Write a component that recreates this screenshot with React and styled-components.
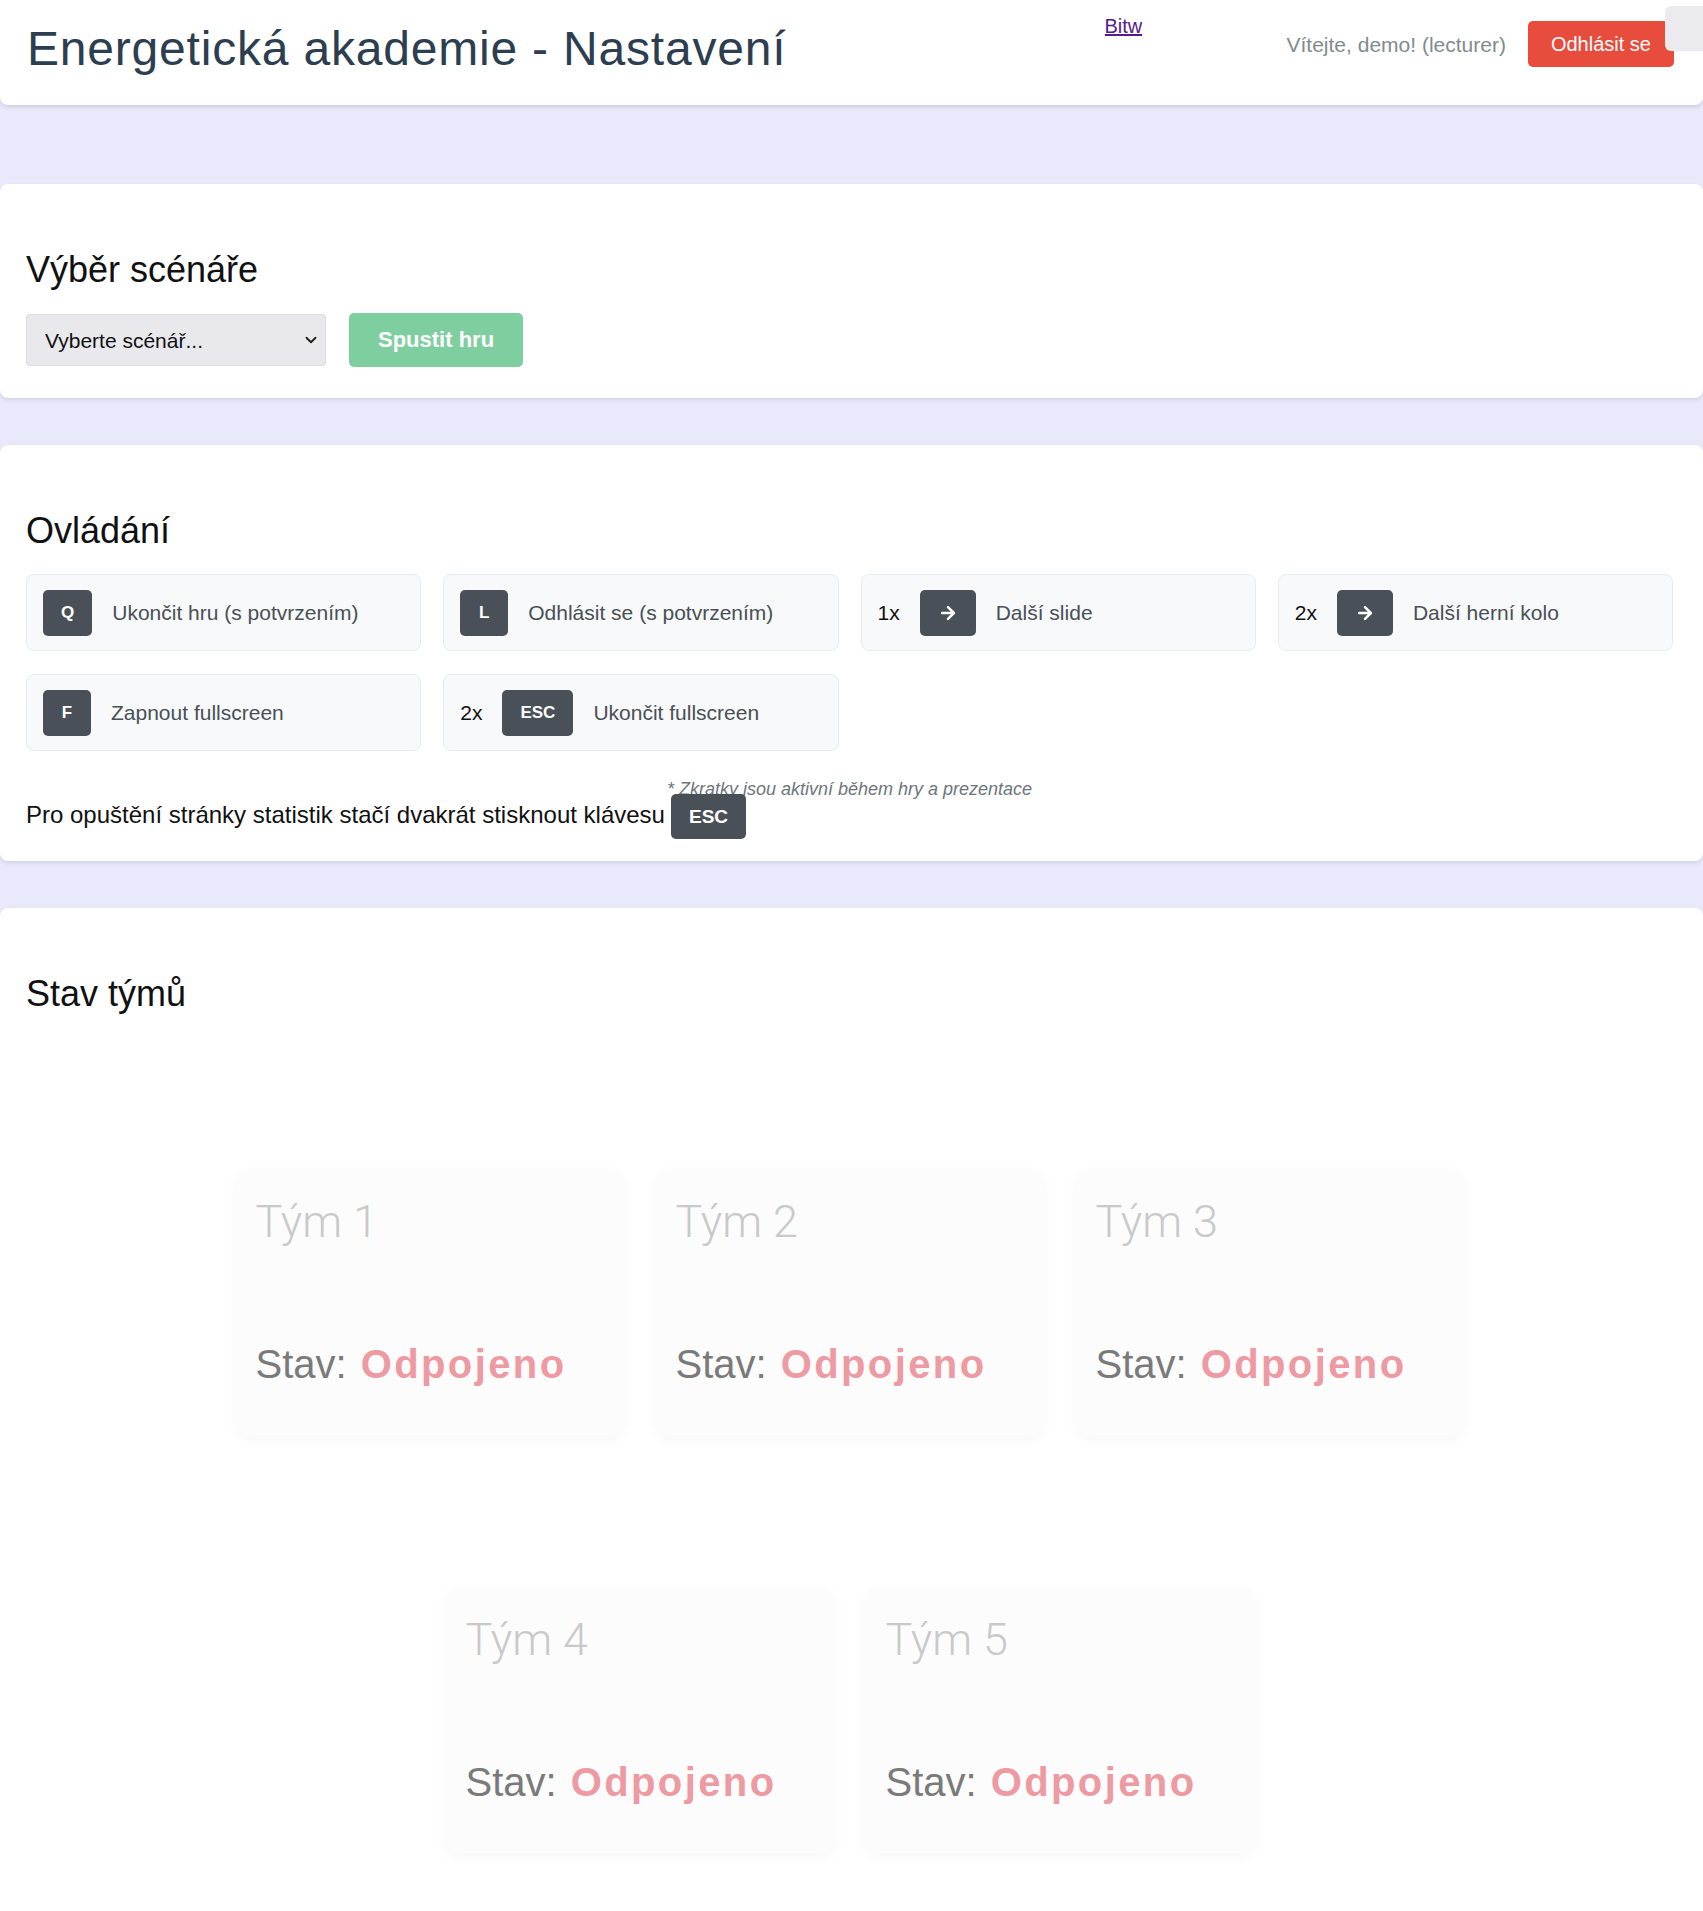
import React from "react";
import styled, { createGlobalStyle } from "styled-components";
import { ArrowRight, ChevronDown } from "lucide-react";

const GlobalStyle = createGlobalStyle`
	body {
		margin: 0;
		background: #e8eafc;
		font-family: "Liberation Sans", Arial, sans-serif;
		color: #212529;
	}
	* {
		box-sizing: border-box;
	}
`;

const Header = styled.header`
	position: relative;
	display: flex;
	align-items: flex-start;
	background: #fff;
	padding: 21px 29px 29px 27px;
	border-radius: 0 0 8px 8px;
	box-shadow: 0 2px 4px rgba(0, 0, 0, 0.12);
`;

const Title = styled.h1`
	flex: 1;
	margin: 0;
	font-size: 48px;
	font-weight: normal;
	letter-spacing: 0.8px;
	color: #2c3e50;
	line-height: 55px;
`;

// the nav link is clipped by its box in the original page
const NavLink = styled.a`
	display: block;
	width: 37px;
	margin: -6px 145px 0 0;
	overflow: hidden;
	white-space: nowrap;
	font-size: 20px;
	color: #551a8b;
	text-decoration: underline;
`;

const Welcome = styled.span`
	margin: 12px 22px 0 0;
	font-size: 21px;
	line-height: 24px;
	color: #7f8c8d;
`;

const LogoutButton = styled.button`
	border: none;
	border-radius: 5px;
	background: #e74c3c;
	color: #fff;
	font-family: inherit;
	font-size: 20px;
	line-height: 24px;
	padding: 11px 23px;
`;

const CornerTab = styled.div`
	position: absolute;
	top: 6px;
	right: 0;
	width: 38px;
	height: 45px;
	background: #ebebef;
	border-radius: 6px 0 0 6px;
`;

const Main = styled.main`
	display: flex;
	flex-direction: column;
	gap: 47px;
	padding-top: 79px;
`;

const Card = styled.section`
	background: #fff;
	border-radius: 8px;
	box-shadow: 0 2px 4px rgba(0, 0, 0, 0.1);
	padding: 65px 30px ${props => props.bottom || 31}px 26px;
`;

const Heading = styled.h2`
	margin: 0 0 23px;
	font-size: 36px;
	font-weight: normal;
	line-height: 41px;
	color: #111;
`;

const Row = styled.div`
	display: flex;
	align-items: center;
	gap: 23px;
`;

const SelectWrap = styled.div`
	position: relative;
	width: 300px;
`;

const Select = styled.select`
	appearance: none;
	width: 100%;
	height: 52px;
	padding: 0 40px 0 18px;
	border: 1px solid #dcdce0;
	border-radius: 4px;
	background: #e9e9ed;
	font-family: inherit;
	font-size: 21px;
	color: #111;
`;

const Chevron = styled.span`
	position: absolute;
	right: 6px;
	top: 17px;
	color: #222;
	pointer-events: none;
`;

const StartButton = styled.button`
	height: 54px;
	padding: 0 29px;
	border: none;
	border-radius: 5px;
	background: #7fcea0;
	color: #fff;
	font-family: inherit;
	font-size: 22px;
	font-weight: bold;
`;

const ShortcutGrid = styled.div`
	display: grid;
	grid-template-columns: repeat(4, 1fr);
	gap: 23px 22px;
`;

const Shortcut = styled.div`
	display: flex;
	align-items: center;
	gap: 20px;
	height: 77px;
	padding: 0 16px;
	background: #f8f9fa;
	border: 1px solid #e9ecef;
	border-radius: 8px;
`;

const Key = styled.kbd`
	display: ${props => (props.inline ? "inline" : "inline-flex")};
	align-items: center;
	justify-content: center;
	min-width: 48px;
	height: ${props => (props.inline ? "auto" : "46px")};
	padding: ${props => (props.inline ? "12px 18px" : "0 18px")};
	margin-left: ${props => (props.inline ? "6px" : "0")};
	background: #495057;
	color: #fff;
	border-radius: 5px;
	font-family: "Liberation Sans", Arial, sans-serif;
	font-size: ${props => (props.inline ? "19px" : "17px")};
	font-weight: bold;
`;

const Times = styled.span`
	font-size: 21px;
	color: #111;
`;

const Label = styled.span`
	font-size: 21px;
	color: #495057;
`;

const Note = styled.p`
	margin: 28px 0 0;
	text-align: center;
	font-size: 18px;
	font-style: italic;
	line-height: 20px;
	color: #6c757d;
`;

const Hint = styled.p`
	margin: 2px 0 0;
	font-size: 24px;
	line-height: 27px;
	color: #111;
`;

const TeamWrap = styled.div`
	display: flex;
	flex-wrap: wrap;
	justify-content: center;
	gap: 152px 32px;
	padding-top: 132px;
`;

const TeamCard = styled.div`
	display: flex;
	flex-direction: column;
	justify-content: space-between;
	width: 388px;
	height: 266px;
	padding: 24px 20px 47px;
	background: #fcfcfd;
	border-radius: 12px;
	box-shadow: 0 4px 14px rgba(0, 0, 0, 0.035);
`;

const TeamName = styled.h3`
	margin: 0;
	font-family: Roboto, "Liberation Sans", sans-serif;
	font-size: 45px;
	font-weight: 300;
	line-height: 57px;
	color: #c9c9c9;
`;

const Status = styled.div`
	font-size: 40px;
	line-height: 48px;
	color: #7a7a7a;
`;

const StatusValue = styled.strong`
	margin-left: 14px;
	letter-spacing: 2.4px;
	color: #ee9aa3;
`;

const shortcuts = [
	{ key: "Q", label: "Ukončit hru (s potvrzením)" },
	{ key: "L", label: "Odhlásit se (s potvrzením)" },
	{ times: "1x", arrow: true, label: "Další slide" },
	{ times: "2x", arrow: true, label: "Další herní kolo" },
	{ key: "F", label: "Zapnout fullscreen" },
	{ times: "2x", key: "ESC", label: "Ukončit fullscreen" },
];

const teams = ["Tým 1", "Tým 2", "Tým 3", "Tým 4", "Tým 5"];

const App = () => {
	return (
		<>
			<GlobalStyle />
			<Header>
				<Title>Energetická akademie - Nastavení</Title>
				<NavLink href="#">Bitwa</NavLink>
				<Welcome>Vítejte, demo! (lecturer)</Welcome>
				<LogoutButton>Odhlásit se</LogoutButton>
				<CornerTab />
			</Header>

			<Main>
				<Card>
					<Heading>Výběr scénáře</Heading>
					<Row>
						<SelectWrap>
							<Select defaultValue="">
								<option value="">Vyberte scénář...</option>
							</Select>
							<Chevron>
								<ChevronDown size={18} strokeWidth={2.5} />
							</Chevron>
						</SelectWrap>
						<StartButton disabled>Spustit hru</StartButton>
					</Row>
				</Card>

				<Card bottom={31}>
					<Heading>Ovládání</Heading>
					<ShortcutGrid>
						{shortcuts.map((s, i) => (
							<Shortcut key={i}>
								{s.times && <Times>{s.times}</Times>}
								<Key>{s.arrow ? <ArrowRight size={20} strokeWidth={3} /> : s.key}</Key>
								<Label>{s.label}</Label>
							</Shortcut>
						))}
					</ShortcutGrid>
					<Note>* Zkratky jsou aktivní během hry a prezentace</Note>
					<Hint>
						Pro opuštění stránky statistik stačí dvakrát stisknout klávesu
						<Key inline>ESC</Key>
					</Hint>
				</Card>

				<Card bottom={107}>
					<Heading>Stav týmů</Heading>
					<TeamWrap>
						{teams.map(t => (
							<TeamCard key={t}>
								<TeamName>{t}</TeamName>
								<Status>
									Stav:<StatusValue>Odpojeno</StatusValue>
								</Status>
							</TeamCard>
						))}
					</TeamWrap>
				</Card>
			</Main>
		</>
	);
};

export default App;
